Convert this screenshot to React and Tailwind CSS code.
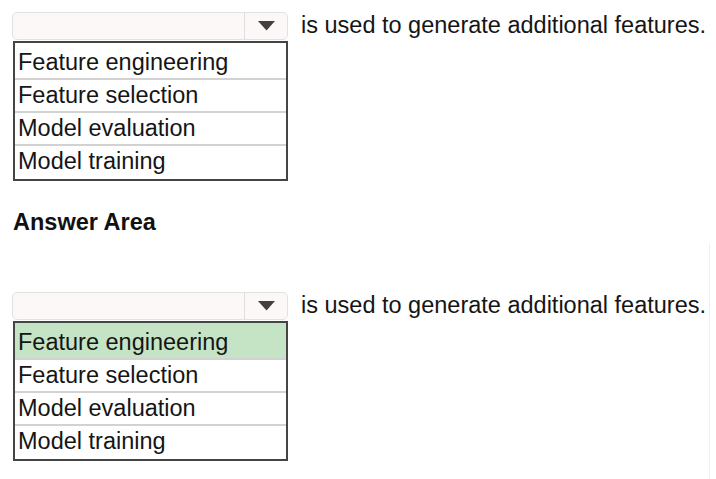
import React from 'react';

const options = ['Feature engineering', 'Feature selection', 'Model evaluation', 'Model training'];

const DropdownQuestion = ({ selected }) => {
    return (
        <div className="flex items-start">
            {/* Left: select + list */}
            <div className="flex flex-col w-[275px]">
                {/* Select box */}
                <div className="h-[28px] ml-[-1px] flex rounded-[5px] border border-[#e2e2e2] bg-[#fdf8f8]">
                    <div className="flex-1" />
                    <div className="w-[43px] border-l border-[#dedede] flex items-center justify-center">
                        <svg width="17" height="10" viewBox="0 0 17 10">
                            <polygon points="0,0 17,0 8.5,9.5" fill="#404040" />
                        </svg>
                    </div>
                </div>

                {/* Options list */}
                <div className="mt-[1px] border-2 border-[#454545] bg-white">
                    {options.map((opt, idx) => (
                        <div
                            key={opt}
                            className={`pl-[3px] text-[23.5px] leading-[31px] text-[#151515] ${idx < options.length - 1 ? 'border-b-2 border-[#d2d2d2]' : ''} ${idx === 0 ? 'h-[37px] pt-[4px]' : 'h-[33px]'} ${selected === idx ? 'bg-[#c5e4c6]' : ''}`}
                        >
                            {opt}
                        </div>
                    ))}
                </div>
            </div>

            {/* Sentence */}
            <p className="ml-[13px] text-[23.5px] leading-[26px] text-[#151515] whitespace-nowrap">
                is used to generate additional features.
            </p>
        </div>
    );
};

export default function App() {
    return (
        <div
            className="w-[716px] h-[479px] bg-white flex overflow-hidden"
            style={{ fontFamily: '"Liberation Sans", Arial, sans-serif' }}
        >
            <div className="w-[709px] pt-[12px] pl-[13px] flex flex-col">
                <DropdownQuestion selected={null} />

                <h2 className="mt-[28px] text-[23.5px] leading-[26px] font-bold text-[#111]">Answer Area</h2>

                <div className="mt-[57px]">
                    <DropdownQuestion selected={0} />
                </div>
            </div>

            {/* faint right edge */}
            <div className="flex-1 pt-[243px]">
                <div className="h-full border-l border-[#f0f0f0]" />
            </div>
        </div>
    );
}
